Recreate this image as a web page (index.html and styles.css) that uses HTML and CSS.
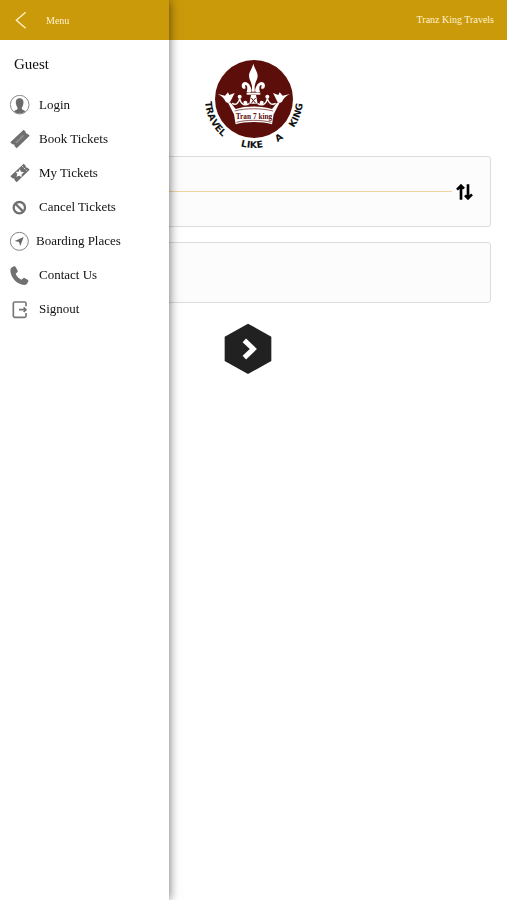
FILE: index.html
```html
<!DOCTYPE html>
<html lang="en">
<head>
    <meta charset="UTF-8">
    <meta name="viewport" content="width=device-width, initial-scale=1">
    <title>Tranz King Travels</title>
    <link rel="stylesheet" href="styles.css">
</head>
<body>

<header class="topbar">Tranz King Travels</header>

<main class="search">
    <svg class="logo" viewBox="-3 0 360 315" role="img" aria-label="Tranz King logo">
        <defs>
            <path id="ring" d="M30 144A147 147 0 0 0 324 144"/>
        </defs>
        <circle cx="177" cy="144" r="117" fill="#5c0f0a"/>
        <!-- crown -->
        <g fill="#fff">
            <path d="M175 38C180 55 188 64 188 74C188 85 181 91 179 106V122H171V106C169 91 162 85 162 74C162 64 170 55 175 38Z"/>
            <path d="M170 120C168 100 153 86 143 96C136 105 143 118 152 112C151 107 149 104 151 102C158 103 158 113 155 122C160 126 166 125 170 120Z"/>
            <path d="M180 120C182 100 197 86 207 96C214 105 207 118 198 112C199 107 201 104 199 102C192 103 192 113 195 122C190 126 184 125 180 120Z"/>
            <path d="M155 125H196V131H155Z"/>
            <path d="M168 132H183L188 158H163Z"/>
            <path d="M68 129L90 134L99 124L103 132L119 126L108 148C105 157 97 158 91 151C88 142 80 135 68 129Z"/>
            <path d="M285 129L263 134L254 124L250 132L234 126L245 148C248 157 256 158 262 151C265 142 273 135 285 129Z"/>
            <path d="M98 153L107 155L122 174C150 164 203 164 231 174L246 155L255 153L237 188C204 178 149 178 116 188Z"/>
            <circle cx="134" cy="137" r="6"/>
            <circle cx="217" cy="137" r="6"/>
            <circle cx="151" cy="155" r="6"/>
            <circle cx="200" cy="155" r="6"/>
            <path d="M116 184C150 174 201 174 237 184L231 220C200 211 151 211 122 220Z"/>
        </g>
        <g fill="none" stroke="#fff" stroke-width="4">
            <path d="M111 157C123 164 131 157 134 143C138 161 149 166 162 158M242 157C230 164 221 157 217 143C213 161 201 166 188 158"/>
            <path d="M124 214C150 206 201 206 229 214" stroke="#5c0f0a" stroke-width="2"/>
            <path d="M119 180C150 171 201 171 234 180" stroke="#5c0f0a" stroke-width="2"/>
        </g>
        <path d="M169 141L175 149L182 141M169 157L175 149L182 157" fill="none" stroke="#5c0f0a" stroke-width="3"/>
        <text class="logo-name" x="177" y="203">Tran 7 king</text>
        <text class="logo-ring"><textPath href="#ring" startOffset="8">TRAVEL</textPath></text>
        <text class="logo-ring"><textPath href="#ring" startOffset="190">LIKE</textPath></text>
        <text class="logo-ring"><textPath href="#ring" startOffset="304">A</textPath></text>
        <text class="logo-ring"><textPath href="#ring" startOffset="369">KING</textPath></text>
    </svg>

    <section class="card route">
        <div class="divider"></div>
        <button class="swap" type="button" aria-label="Swap places">
            <svg width="17" height="16" viewBox="0 0 51 48" fill="none" stroke="#000" stroke-width="8">
                <path d="M15 47V6M3 17L15 5L24 14M36 1V42M27 34L36 43L48 31"/>
            </svg>
        </button>
    </section>

    <section class="card date"></section>

    <button class="go" type="button" aria-label="Search">
        <svg width="48" height="52" viewBox="0 0 144 156">
            <path d="M72 2L142 41V114L72 153L2 114V41Z" fill="#212121"/>
            <path d="M61 52L88 78L61 104" fill="none" stroke="#fff" stroke-width="15"/>
        </svg>
    </button>
</main>

<aside class="drawer">
    <div class="drawer-bar">
        <button class="back" type="button" aria-label="Close menu">
            <svg width="12" height="20" viewBox="0 0 36 60" fill="none" stroke="#fff3cf" stroke-width="4">
                <path d="M32 7L4 31L32 55"/>
            </svg>
        </button>
        <span>Menu</span>
    </div>

    <div class="user">Guest</div>

    <nav class="menu">
        <a href="#">
            <svg class="icon" viewBox="0 0 60 60">
                <circle cx="29" cy="29" r="28" fill="#fff" stroke="#8a8a8a" stroke-width="3"/>
                <path d="M29 10C38 10 42 17 40 27C39 33 36 36 35 40C36 46 43 45 46 49C37 58 21 58 12 49C15 45 22 46 23 40C22 36 19 33 18 27C16 17 20 10 29 10Z" fill="#6a6a6a"/>
            </svg>
            Login
        </a>
        <a href="#">
            <svg class="icon" viewBox="0 0 60 60">
                <path d="M1 40L41 2L47 8Q46 15 53 14L59 20L20 58L14 52Q15 45 7 46Z" fill="#6f6f6f"/>
                <path d="M18 41L41 19" stroke="#989898" stroke-width="7" stroke-dasharray="4 2"/>
            </svg>
            Book Tickets
        </a>
        <a href="#">
            <svg class="icon" viewBox="0 0 60 60">
                <path d="M1 40L41 2L47 8Q46 15 53 14L59 20L20 58L14 52Q15 45 7 46Z" fill="#6f6f6f"/>
                <path d="M29 18L33 26L42 28L35 34L35 42L28 38L19 41L22 33L17 26L26 26Z" fill="#fff"/>
                <path d="M37 10L50 23" stroke="#fff" stroke-width="3" stroke-dasharray="4 4"/>
            </svg>
            My Tickets
        </a>
        <a href="#">
            <svg class="icon" viewBox="0 0 60 60" fill="none" stroke="#707070" stroke-width="7">
                <circle cx="28" cy="32" r="17"/>
                <path d="M17 21L39 43"/>
            </svg>
            Cancel Tickets
        </a>
        <a class="close" href="#">
            <svg class="icon" viewBox="0 0 60 60">
                <circle cx="28" cy="31" r="27" fill="#fff" stroke="#858585" stroke-width="3"/>
                <path d="M41 18L31 45L27 33L14 30Z" fill="#686868"/>
            </svg>
            Boarding Places
        </a>
        <a href="#">
            <svg class="icon" viewBox="0 0 60 60">
                <path d="M6 7L12 4Q15 3 17 6L23 17Q24 20 22 22L17 26C20 34 27 41 35 44L39 40Q41 38 44 39L54 45Q56 47 55 49L52 55Q50 60 43 60C21 58 3 39 1 17Q1 10 6 7Z" fill="#707070"/>
            </svg>
            Contact Us
        </a>
        <a href="#">
            <svg class="icon" viewBox="0 0 60 60" fill="none" stroke="#777" stroke-width="5">
                <path d="M48 22V13Q48 9 44 9H14Q10 9 10 13V51Q10 55 14 55H44Q48 55 48 51V42"/>
                <path d="M27 32H47M41 25L48 32L41 39"/>
            </svg>
            Signout
        </a>
    </nav>
</aside>

</body>
</html>
```

FILE: styles.css
```css
* {
    box-sizing: border-box;
}

body {
    margin: 0;
    background-color: #fff;
    color: #111;
    font-family: "Liberation Serif", "Times New Roman", serif;
    font-size: 13px;
}

button {
    display: flex;
    border: none;
    padding: 0;
    background: none;
    cursor: pointer;
}

svg {
    display: block;
}

.topbar {
    height: 40px;
    padding: 0 13px;
    line-height: 40px;
    text-align: right;
    font-size: 10px;
    color: #fff3cf;
    background-color: #cb9a0a;
}

/* search page */
.search {
    display: flex;
    flex-direction: column;
    padding: 11px 16px;
}

.logo {
    width: 120px;
    height: 105px;
    align-self: center;
}

.logo-name {
    font-size: 22px;
    font-weight: bold;
    text-anchor: middle;
    fill: #5c0f0a;
}

.logo-ring {
    font-family: "DejaVu Sans", sans-serif;
    font-size: 28px;
    font-weight: bold;
    font-kerning: none;
    fill: #111;
}

.card {
    border: 1px solid #dcdcdc;
    border-radius: 3px;
    background-color: #fcfcfc;
}

.route {
    display: flex;
    align-items: center;
    gap: 4px;
    height: 71px;
    padding: 0 17px;
}

.divider {
    flex: 1;
    height: 1px;
    background-color: #f0d4a0;
}

.date {
    height: 61px;
    margin-top: 15px;
}

.go {
    align-self: center;
    margin-top: 20px;
    margin-right: 12px;
}

/* side menu */
.drawer {
    position: fixed;
    top: 0;
    bottom: 0;
    left: 0;
    width: calc(100% / 3);
    background-color: #fff;
    box-shadow: 0 0 10px rgba(0, 0, 0, 0.6);
}

.drawer-bar {
    display: flex;
    align-items: center;
    gap: 19px;
    height: 40px;
    padding: 0 15px;
    font-size: 10px;
    color: #fff3cf;
    background-color: #cb9a0a;
}

.user {
    padding: 0 14px;
    line-height: 48px;
    font-size: 15px;
}

.menu a {
    display: flex;
    align-items: center;
    gap: 9px;
    height: 34px;
    padding: 0 10px;
    color: inherit;
    text-decoration: none;
    white-space: nowrap;
}

.menu .close {
    gap: 6px;
}

.icon {
    width: 20px;
    height: 20px;
    flex: none;
}
```
